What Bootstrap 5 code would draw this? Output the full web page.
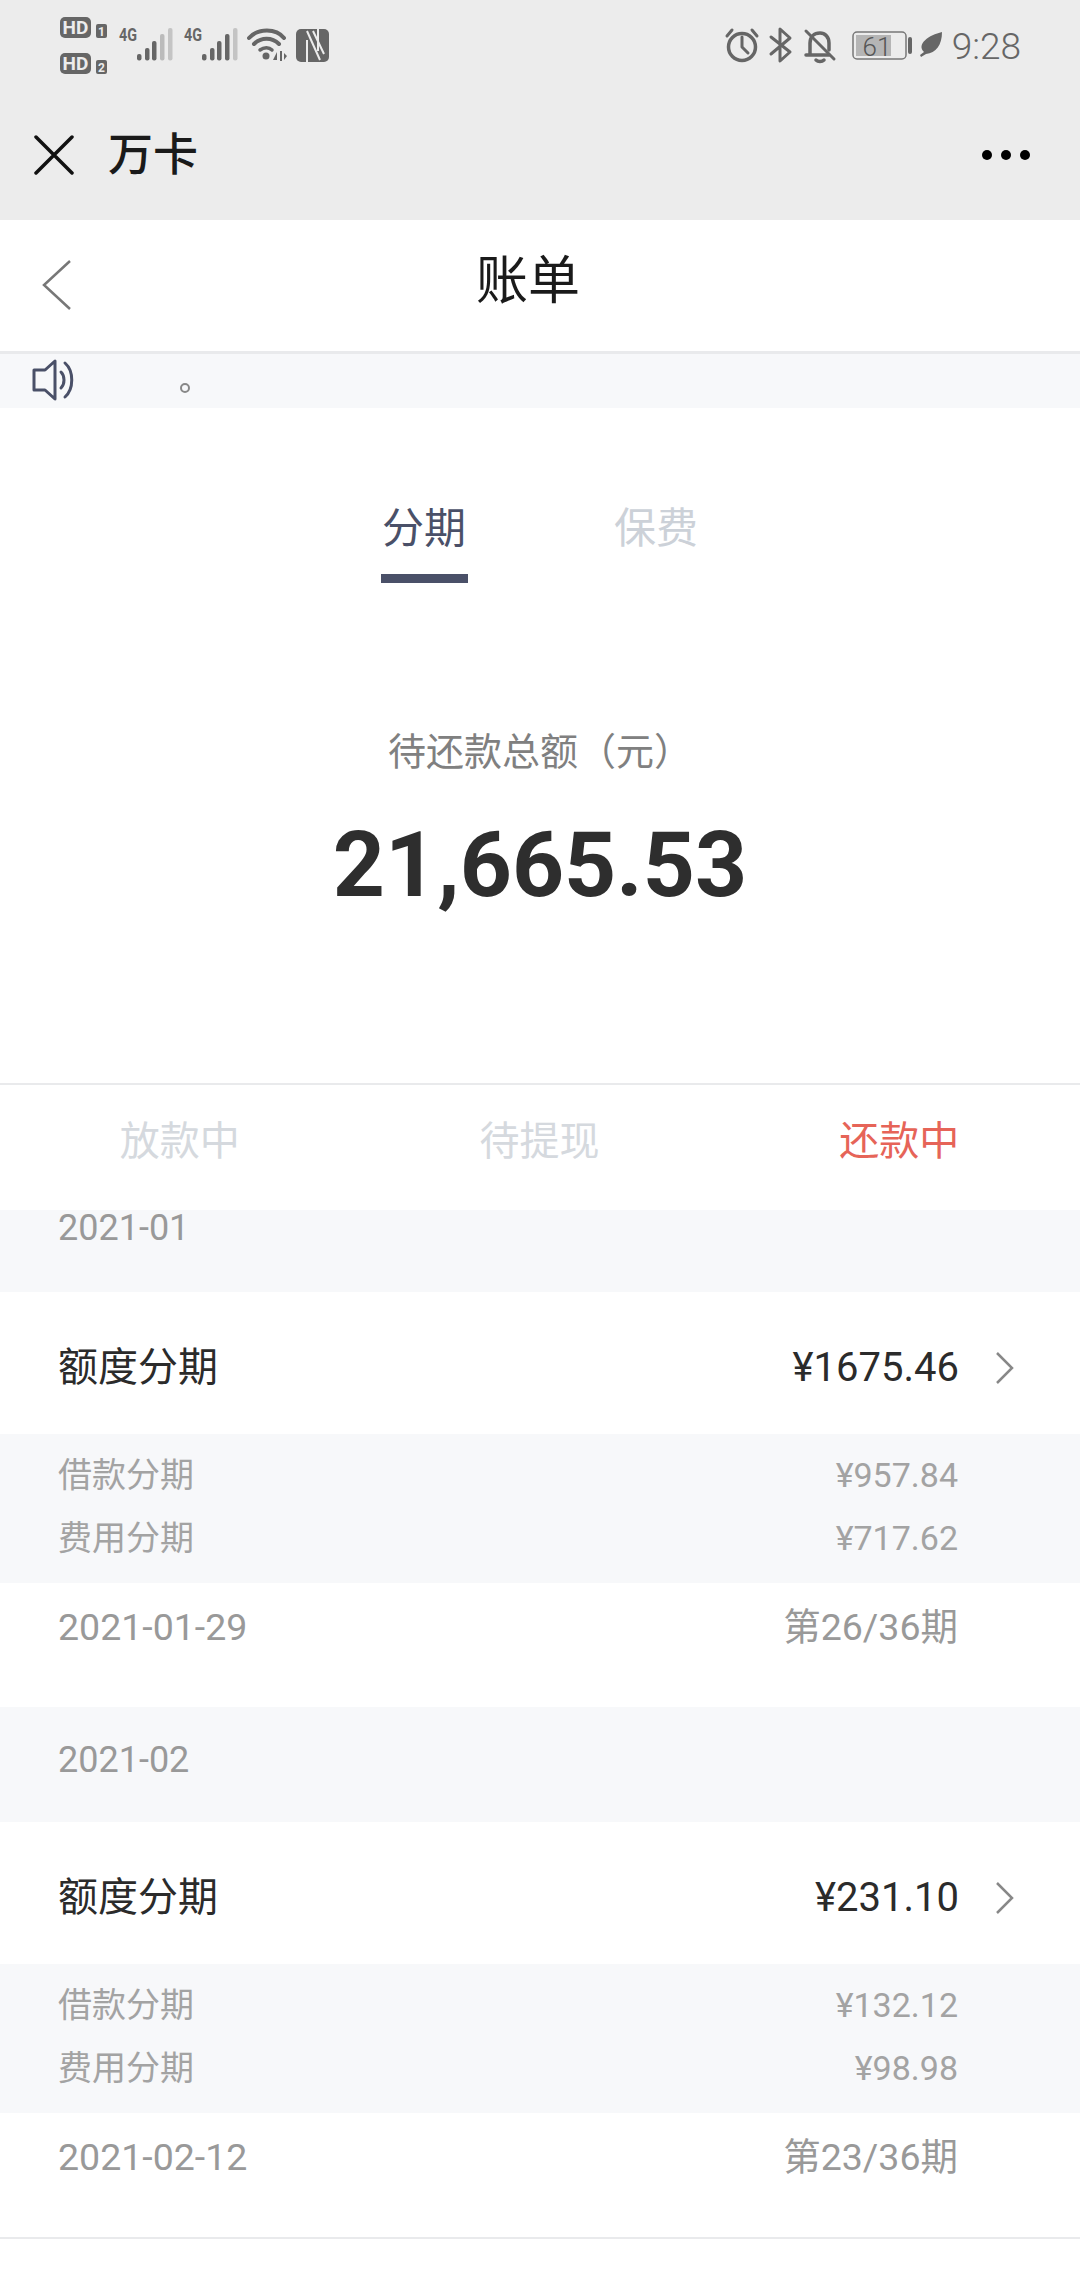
<!DOCTYPE html>
<html lang="zh">
<head>
  <meta charset="UTF-8" />
  <meta name="viewport" content="width=device-width, initial-scale=1" />
  <title>账单</title>
  <link href="https://cdn.jsdelivr.net/npm/bootstrap@5.3.0/dist/css/bootstrap.min.css" rel="stylesheet" />
  <style>
    body {
      font-family: Roboto, "Noto Sans CJK SC", sans-serif;
      background-color: #fff;
      width: 1080px;
      height: 2280px;
      overflow: hidden;
    }
    .top-area { background-color: #ececec; height: 220px; }
    .status-row { height: 90px; padding: 14px 59px 0 58px; color: #666; }
    .clock { font-size: 37px; line-height: 62px; color: #666; font-weight: 300; margin-left: 6px; margin-top: 2px; }
    .title-row { height: 130px; padding: 0 48px 0 34px; }
    .wx-name { font-size: 45px; font-weight: 500; color: #1a1a1a; margin-left: 34px; line-height: 1; }
    .nav-head { height: 134px; border-bottom: 3px solid #e9eaec; padding-right: 24px; }
    .nav-title { font-size: 52px; font-weight: 400; color: #1a1a1a; line-height: 1; margin-top: -8px; }
    .back-btn { left: 42px; top: 39px; }
    .notice-bar { height: 54px; background-color: #f7f8fa; padding: 4px 0 0 32px; }
    .notice-dot { margin-left: 102px; margin-top: 25px; width: 10px; height: 10px; border: 2px solid #888; border-radius: 50%; }
    .main-tabs { height: 165px; padding-top: 93px; gap: 145px; }
    .main-tab { width: 87px; text-align: center; font-size: 42px; line-height: 56px; color: #ccd1d8; white-space: nowrap; }
    .main-tab.on { color: #4a5068; }
    .tab-bar { height: 9px; margin-top: 17px; background-color: #4a5068; }
    .total-box { height: 512px; padding-top: 154px; border-bottom: 2px solid #e9eaec; }
    .total-label { font-size: 38px; line-height: 50px; color: #808080; }
    .total-num { font-size: 91px; font-weight: 700; color: #2e2e2e; line-height: 1; margin-top: 43px; }
    .state-tabs { height: 125px; padding-right: 1px; }
    .state-tab { font-size: 40px; color: #d5d9de; line-height: 1; padding-top: 37px; }
    .state-tab.on { color: #e66458; }
    .month-head { background-color: #f7f8fa; color: #999; font-size: 36px; padding-left: 58px; line-height: 1; }
    .month-cut { height: 82px; }
    .month-full { height: 115px; padding-top: 35px; }
    .bill-row { height: 142px; padding: 10px 65px 0 58px; }
    .bill-name { font-size: 40px; color: #2b2b2b; }
    .bill-amt { font-size: 40px; color: #2b2b2b; font-weight: 400; }
    .arrow-icon { margin-left: 36px; }
    .detail-box { height: 149px; background-color: #f7f8fa; padding: 10px 122px 0 58px; color: #a3a3a3; font-size: 34px; line-height: 63px; }
    .foot-row { height: 124px; padding: 0 122px 35px 58px; color: #999; font-size: 37.5px; }
    .end-line { border-top: 2px solid #e9eaec; }
  </style>
</head>
<body>
  <div class="top-area">
    <div class="status-row d-flex justify-content-between align-items-start">
      <svg width="272" height="62" viewBox="58 14 272 62">
        <rect x="60" y="17" width="31" height="21" rx="5" fill="#666"/>
        <rect x="96" y="24" width="11" height="14" rx="2" fill="#666"/>
        <rect x="60" y="53" width="31" height="21" rx="5" fill="#666"/>
        <rect x="96" y="60" width="11" height="14" rx="2" fill="#666"/>
        <text x="75.5" y="33.500" font-size="19" font-weight="700" fill="#ececec" text-anchor="middle" font-family="Roboto">HD</text>
        <text x="75.5" y="69.500" font-size="19" font-weight="700" fill="#ececec" text-anchor="middle" font-family="Roboto">HD</text>
        <text x="101.500" y="36" font-size="12" font-weight="700" fill="#ececec" text-anchor="middle" font-family="Roboto">1</text>
        <text x="101.500" y="72" font-size="12" font-weight="700" fill="#ececec" text-anchor="middle" font-family="Roboto">2</text>

        <text x="119" y="41" font-size="18" font-weight="700" fill="#666" font-family="Roboto" textLength="18" lengthAdjust="spacingAndGlyphs">4G</text>
        <rect x="137" y="54" width="4.500" height="6.500" rx="2" fill="#666"/>
        <rect x="145" y="48" width="4.500" height="12.500" rx="2" fill="#666"/>
        <rect x="152" y="41" width="4.500" height="19.500" rx="2" fill="#666"/>
        <rect x="160" y="34" width="4.500" height="26.500" rx="2" fill="#bbb"/>
        <rect x="168" y="28" width="4.500" height="32.500" rx="2" fill="#c4c4c4"/>

        <text x="184" y="41" font-size="18" font-weight="700" fill="#666" font-family="Roboto" textLength="18" lengthAdjust="spacingAndGlyphs">4G</text>
        <rect x="202" y="54" width="4.500" height="6.500" rx="2" fill="#666"/>
        <rect x="210" y="48" width="4.500" height="12.500" rx="2" fill="#666"/>
        <rect x="217" y="41" width="4.500" height="19.500" rx="2" fill="#666"/>
        <rect x="225" y="34" width="4.500" height="26.500" rx="2" fill="#666"/>
        <rect x="233" y="28" width="4.500" height="32.500" rx="2" fill="#c4c4c4"/>

        <g fill="none" stroke="#666" stroke-linecap="round">
          <path d="M249 38C258 28 276 28 284 38" stroke-width="4"/>
          <path d="M254 44C261 37 272 37 279 44" stroke-width="4"/>
          <path d="M260 50C264 47 269 47 272 50" stroke-width="3.500"/>
        </g>
        <circle cx="266" cy="56" r="3.500" fill="#666"/>
        <path d="M277 52L273 60H277ZM280 51H282V61H280ZM284 53L287 56L284 60Z" fill="#666"/>

        <rect x="296" y="29" width="33" height="33" rx="5" fill="#666"/>
        <path d="M307 62V40M318 29V51" fill="none" stroke="#ececec" stroke-width="2"/>
        <path d="M307 31L320 60M313 31L324 54" fill="none" stroke="#ececec" stroke-width="2"/>
      </svg>
      <div class="d-flex align-items-start">
        <svg width="222" height="62" viewBox="725 14 222 62">
          <g fill="none" stroke="#666" stroke-linecap="round" stroke-linejoin="round">
            <circle cx="743" cy="47" r="13.500" stroke-width="3.500"/>
            <path d="M743 37V47L749 53" stroke-width="3"/>
            <path d="M728 36L733 30M758 36L753 30" stroke-width="3"/>
            <path d="M772 37L791 52L781 61V29L791 38L772 54" stroke-width="3"/>
            <path d="M807 55H830M811 54V43C811 37 815 33 821 33C826 33 830 37 830 43V50M817 60C819 62 823 62 825 60" stroke-width="3.500"/>
            <path d="M807 31L835 59" stroke-width="3"/>
          </g>
          <rect x="854" y="32" width="53" height="27" rx="4" fill="none" stroke="#777" stroke-width="1.500"/>
          <rect x="857" y="35" width="35" height="21" fill="#b5b5b5"/>
          <rect x="909" y="37" width="4" height="17" rx="2" fill="#666"/>
          <text x="878" y="56" font-size="26" font-weight="300" fill="#555" text-anchor="middle" font-family="Roboto">61</text>
          <path d="M943 32C943 45 937 53 927 54L922 57L921 55L925 52C917 44 930 35 943 32Z" fill="#666"/>
        </svg>
        <span class="clock">9:28</span>
      </div>
    </div>
    <div class="title-row d-flex align-items-center justify-content-between">
      <div class="d-flex align-items-center">
        <svg width="40" height="40" viewBox="0 0 40 40" stroke="#111" stroke-width="3.500" stroke-linecap="round" fill="none">
          <path d="M2 2L38 38M38 2L2 38"/>
        </svg>
        <span class="wx-name">万卡</span>
      </div>
      <svg width="50" height="10" viewBox="0 0 50 10" fill="#000">
        <circle cx="5" cy="5" r="5"/><circle cx="24" cy="5" r="5"/><circle cx="43" cy="5" r="5"/>
      </svg>
    </div>
  </div>

  <div class="nav-head position-relative d-flex align-items-center justify-content-center">
    <svg class="back-btn position-absolute" width="30" height="52" viewBox="0 0 30 52" fill="none" stroke="#777" stroke-width="2.500">
      <path d="M28 2L2 26L28 50"/>
    </svg>
    <div class="nav-title">账单</div>
  </div>

  <div class="notice-bar d-flex">
    <svg width="46" height="44" viewBox="0 0 46 44" fill="none" stroke="#4a5068" stroke-width="3" stroke-linejoin="round" stroke-linecap="round">
      <path d="M2 12H13L23 3V41L13 32H2Z"/>
      <path d="M29 14C33 18 33 26 29 30M33 5C42 13 42 31 33 39"/>
    </svg>
    <div class="notice-dot"></div>
  </div>

  <div class="main-tabs d-flex justify-content-center">
    <div class="main-tab on">分期<div class="tab-bar"></div></div>
    <div class="main-tab">保费</div>
  </div>

  <div class="total-box text-center">
    <div class="total-label">待还款总额（元）</div>
    <div class="total-num">21,665.53</div>
  </div>

  <div class="state-tabs row g-0 text-center">
    <div class="col-4 state-tab">放款中</div>
    <div class="col-4 state-tab">待提现</div>
    <div class="col-4 state-tab on">还款中</div>
  </div>

  <div class="month-head month-cut">2021-01</div>
  <div class="bill-row d-flex align-items-center justify-content-between">
    <span class="bill-name">额度分期</span>
    <div class="d-flex align-items-center">
      <span class="bill-amt">¥1675.46</span>
      <svg class="arrow-icon" width="20" height="34" viewBox="0 0 20 34" fill="none" stroke="#888" stroke-width="2.500"><path d="M2 2L17 17L2 32"/></svg>
    </div>
  </div>
  <div class="detail-box">
    <div class="d-flex justify-content-between"><span>借款分期</span><span>¥957.84</span></div>
    <div class="d-flex justify-content-between"><span>费用分期</span><span>¥717.62</span></div>
  </div>
  <div class="foot-row d-flex align-items-center justify-content-between">
    <span>2021-01-29</span><span>第26/36期</span>
  </div>

  <div class="month-head month-full">2021-02</div>
  <div class="bill-row d-flex align-items-center justify-content-between">
    <span class="bill-name">额度分期</span>
    <div class="d-flex align-items-center">
      <span class="bill-amt">¥231.10</span>
      <svg class="arrow-icon" width="20" height="34" viewBox="0 0 20 34" fill="none" stroke="#888" stroke-width="2.500"><path d="M2 2L17 17L2 32"/></svg>
    </div>
  </div>
  <div class="detail-box">
    <div class="d-flex justify-content-between"><span>借款分期</span><span>¥132.12</span></div>
    <div class="d-flex justify-content-between"><span>费用分期</span><span>¥98.98</span></div>
  </div>
  <div class="foot-row d-flex align-items-center justify-content-between">
    <span>2021-02-12</span><span>第23/36期</span>
  </div>
  <div class="end-line"></div>

  <script src="https://cdn.jsdelivr.net/npm/bootstrap@5.3.0/dist/js/bootstrap.bundle.min.js"></script>
</body>
</html>
